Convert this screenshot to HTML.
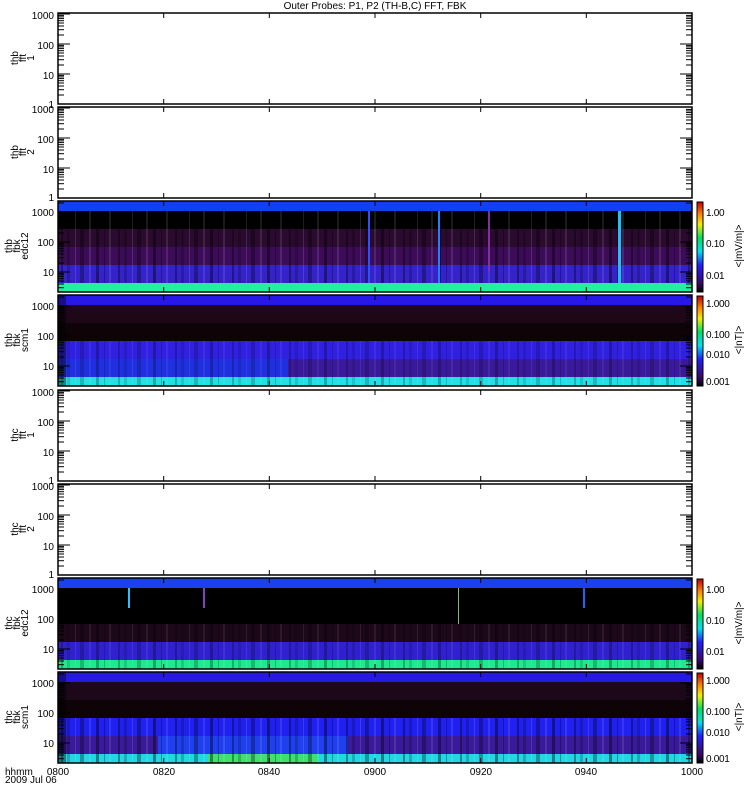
<!DOCTYPE html>
<html><head><meta charset="utf-8"><style>
html,body{margin:0;padding:0;background:#fff;width:750px;height:800px;overflow:hidden}
text{font-family:"Liberation Sans",sans-serif;font-size:10px;fill:#000}
</style></head><body>
<svg width="750" height="800" viewBox="0 0 750 800" xmlns="http://www.w3.org/2000/svg">
<defs>
<g id="dec" stroke="#000" stroke-width="1">
<line x1="0" y1="0" x2="12" y2="0"/>
<line x1="0" y1="-9" x2="6" y2="-9"/><line x1="0" y1="-14.3" x2="6" y2="-14.3"/>
<line x1="0" y1="-18" x2="6" y2="-18"/><line x1="0" y1="-21" x2="6" y2="-21"/>
<line x1="0" y1="-23.3" x2="6" y2="-23.3"/><line x1="0" y1="-25.4" x2="6" y2="-25.4"/>
<line x1="0" y1="-27.1" x2="6" y2="-27.1"/><line x1="0" y1="-28.6" x2="6" y2="-28.6"/>
</g>
<g id="xt" stroke="#000" stroke-width="1">
<line x1="105.7" y1="0" x2="105.7" y2="5"/><line x1="211.3" y1="0" x2="211.3" y2="5"/>
<line x1="317" y1="0" x2="317" y2="5"/><line x1="422.7" y1="0" x2="422.7" y2="5"/>
<line x1="528.3" y1="0" x2="528.3" y2="5"/>
<line x1="105.7" y1="91" x2="105.7" y2="86"/><line x1="211.3" y1="91" x2="211.3" y2="86"/>
<line x1="317" y1="91" x2="317" y2="86"/><line x1="422.7" y1="91" x2="422.7" y2="86"/>
<line x1="528.3" y1="91" x2="528.3" y2="86"/>
</g>
<g id="fftticks">
<use href="#dec" transform="translate(0,91)"/><use href="#dec" transform="translate(0,61)"/><use href="#dec" transform="translate(0,31)"/><line x1="0" y1="1" x2="12" y2="1" stroke="#000"/>
<use href="#dec" transform="translate(634,91) scale(-1,1)"/><use href="#dec" transform="translate(634,61) scale(-1,1)"/><use href="#dec" transform="translate(634,31) scale(-1,1)"/>
<use href="#xt"/>
</g>
<g id="fbkticks">
<use href="#dec" transform="translate(0,101)"/><use href="#dec" transform="translate(0,71)"/><use href="#dec" transform="translate(0,41)"/><use href="#dec" transform="translate(0,11)"/>
<use href="#dec" transform="translate(634,101) scale(-1,1)"/><use href="#dec" transform="translate(634,71) scale(-1,1)"/><use href="#dec" transform="translate(634,41) scale(-1,1)"/><use href="#dec" transform="translate(634,11) scale(-1,1)"/>
<use href="#xt"/>
</g>
<pattern id="st" width="57" height="91" patternUnits="userSpaceOnUse">
<rect x="3" y="0" width="2" height="91" fill="#000" opacity=".35"/>
<rect x="9" y="0" width="3" height="91" fill="#000" opacity=".2"/>
<rect x="17" y="0" width="1" height="91" fill="#fff" opacity=".12"/>
<rect x="22" y="0" width="4" height="91" fill="#000" opacity=".3"/>
<rect x="31" y="0" width="2" height="91" fill="#fff" opacity=".1"/>
<rect x="38" y="0" width="3" height="91" fill="#000" opacity=".4"/>
<rect x="46" y="0" width="1" height="91" fill="#000" opacity=".3"/>
<rect x="51" y="0" width="2" height="91" fill="#fff" opacity=".1"/>
</pattern>
<linearGradient id="cb" x1="0" y1="1" x2="0" y2="0">
<stop offset="0" stop-color="#000"/><stop offset=".1" stop-color="#3a0868"/><stop offset=".3" stop-color="#2020ff"/>
<stop offset=".45" stop-color="#00e0f0"/><stop offset=".6" stop-color="#00e060"/><stop offset=".75" stop-color="#f0f000"/>
<stop offset=".87" stop-color="#ff8000"/><stop offset="1" stop-color="#c00000"/>
</linearGradient>
</defs>

<text x="375" y="9" text-anchor="middle">Outer Probes: P1, P2 (TH-B,C) FFT, FBK</text>

<svg x="58" y="13" width="634" height="91"><use href="#fftticks"/></svg>
<rect x="58" y="13" width="634" height="91" fill="none" stroke="#000" stroke-width="1.5"/>
<svg x="58" y="107" width="634" height="91"><use href="#fftticks"/></svg>
<rect x="58" y="107" width="634" height="91" fill="none" stroke="#000" stroke-width="1.5"/>
<svg x="58" y="201" width="634" height="91">
<rect x="0" y="0" width="634" height="10" fill="#1040f0"/>
<rect x="0" y="10" width="634" height="18" fill="#000"/>
<rect x="0" y="28" width="634" height="18" fill="#2a0a2e"/>
<rect x="0" y="46" width="634" height="18" fill="#3c0c58"/>
<rect x="0" y="64" width="634" height="18" fill="#3522c8"/>
<rect x="0" y="82" width="634" height="9" fill="#20f0a0"/>
<rect x="0" y="10" width="634" height="72" fill="url(#st)"/>
<rect x="380" y="10" width="2" height="72" fill="#2080ff"/><rect x="430" y="10" width="2" height="60" fill="#8030a0"/>
<rect x="560" y="10" width="3" height="72" fill="#20c0ff"/><rect x="310" y="10" width="2" height="72" fill="#3050ff"/>
<use href="#fbkticks"/></svg>
<rect x="58" y="201" width="634" height="91" fill="none" stroke="#000" stroke-width="1.5"/>
<svg x="58" y="295" width="634" height="91">
<rect x="0" y="0" width="634" height="10" fill="#2818e8"/>
<rect x="0" y="10" width="634" height="18" fill="#1e0818"/>
<rect x="0" y="28" width="634" height="18" fill="#0e0408"/>
<rect x="0" y="46" width="634" height="18" fill="#3020e0"/>
<rect x="0" y="64" width="634" height="18" fill="#2030e0"/>
<rect x="230" y="64" width="404" height="18" fill="#3a1a9a"/>
<rect x="0" y="82" width="634" height="9" fill="#20e0e8"/>
<rect x="0" y="0" width="8" height="91" fill="#000" opacity=".4"/>
<rect x="0" y="46" width="634" height="45" fill="url(#st)" opacity=".6"/>
<use href="#fbkticks"/></svg>
<rect x="58" y="295" width="634" height="91" fill="none" stroke="#000" stroke-width="1.5"/>
<svg x="58" y="390" width="634" height="91"><use href="#fftticks"/></svg>
<rect x="58" y="390" width="634" height="91" fill="none" stroke="#000" stroke-width="1.5"/>
<svg x="58" y="484" width="634" height="91"><use href="#fftticks"/></svg>
<rect x="58" y="484" width="634" height="91" fill="none" stroke="#000" stroke-width="1.5"/>
<svg x="58" y="578" width="634" height="91">
<rect x="0" y="0" width="634" height="10" fill="#1a40f0"/>
<rect x="0" y="10" width="634" height="36" fill="#000"/>
<rect x="0" y="46" width="634" height="18" fill="#1c0818"/>
<rect x="0" y="64" width="634" height="18" fill="#3020d0"/>
<rect x="0" y="82" width="634" height="9" fill="#20e890"/>
<rect x="0" y="46" width="634" height="45" fill="url(#st)" opacity=".7"/>
<rect x="70" y="10" width="2" height="20" fill="#30c0ff"/><rect x="145" y="10" width="2" height="20" fill="#8040c0"/>
<rect x="400" y="10" width="1" height="36" fill="#80c080"/><rect x="525" y="10" width="2" height="20" fill="#2060ff"/>
<use href="#fbkticks"/></svg>
<rect x="58" y="578" width="634" height="91" fill="none" stroke="#000" stroke-width="1.5"/>
<svg x="58" y="672" width="634" height="91">
<rect x="0" y="0" width="634" height="10" fill="#2818e8"/>
<rect x="0" y="10" width="634" height="18" fill="#1c0818"/>
<rect x="0" y="28" width="634" height="18" fill="#0e0408"/>
<rect x="0" y="46" width="634" height="18" fill="#2020f0"/>
<rect x="0" y="64" width="634" height="18" fill="#3a1a9a"/>
<rect x="100" y="64" width="190" height="18" fill="#2040f0"/>
<rect x="0" y="82" width="634" height="9" fill="#20d8e0"/>
<rect x="150" y="82" width="110" height="9" fill="#40e070"/>
<rect x="0" y="0" width="8" height="91" fill="#000" opacity=".4"/>
<rect x="0" y="46" width="634" height="45" fill="url(#st)"/>
<use href="#fbkticks"/></svg>
<rect x="58" y="672" width="634" height="91" fill="none" stroke="#000" stroke-width="1.5"/>

<g text-anchor="end">
<text x="54" y="19">1000</text><text x="54" y="49">100</text><text x="54" y="79">10</text><text x="54" y="108">1</text>
<text x="54" y="113">1000</text><text x="54" y="143">100</text><text x="54" y="173">10</text><text x="54" y="201">1</text>
<text x="54" y="216">1000</text><text x="54" y="246">100</text><text x="54" y="276">10</text>
<text x="54" y="310">1000</text><text x="54" y="340">100</text><text x="54" y="370">10</text>
<text x="54" y="396">1000</text><text x="54" y="426">100</text><text x="54" y="456">10</text><text x="54" y="484">1</text>
<text x="54" y="490">1000</text><text x="54" y="520">100</text><text x="54" y="550">10</text><text x="54" y="578">1</text>
<text x="54" y="593">1000</text><text x="54" y="623">100</text><text x="54" y="653">10</text>
<text x="54" y="687">1000</text><text x="54" y="717">100</text><text x="54" y="747">10</text>
</g>
<g text-anchor="middle">
<text transform="translate(18,58) rotate(-90)"><tspan x="0" dy="0">thb</tspan><tspan x="0" dy="8">fft</tspan><tspan x="0" dy="8">1</tspan></text>
<text transform="translate(18,152) rotate(-90)"><tspan x="0">thb</tspan><tspan x="0" dy="8">fft</tspan><tspan x="0" dy="8">2</tspan></text>
<text transform="translate(12,246) rotate(-90)"><tspan x="0">thb</tspan><tspan x="0" dy="8">fbk</tspan><tspan x="0" dy="8">edc12</tspan></text>
<text transform="translate(12,340) rotate(-90)"><tspan x="0">thb</tspan><tspan x="0" dy="8">fbk</tspan><tspan x="0" dy="8">scm1</tspan></text>
<text transform="translate(18,435) rotate(-90)"><tspan x="0">thc</tspan><tspan x="0" dy="8">fft</tspan><tspan x="0" dy="8">1</tspan></text>
<text transform="translate(18,529) rotate(-90)"><tspan x="0">thc</tspan><tspan x="0" dy="8">fft</tspan><tspan x="0" dy="8">2</tspan></text>
<text transform="translate(12,623) rotate(-90)"><tspan x="0">thc</tspan><tspan x="0" dy="8">fbk</tspan><tspan x="0" dy="8">edc12</tspan></text>
<text transform="translate(12,717) rotate(-90)"><tspan x="0">thc</tspan><tspan x="0" dy="8">fbk</tspan><tspan x="0" dy="8">scm1</tspan></text>
</g>

<rect x="697" y="202" width="6" height="90" fill="url(#cb)" stroke="#000"/>
<rect x="697" y="296" width="6" height="90" fill="url(#cb)" stroke="#000"/>
<rect x="697" y="579" width="6" height="90" fill="url(#cb)" stroke="#000"/>
<rect x="697" y="673" width="6" height="90" fill="url(#cb)" stroke="#000"/>
<g letter-spacing="-0.3">
<text x="706" y="216">1.00</text><text x="706" y="247">0.10</text><text x="706" y="279">0.01</text>
<text x="706" y="307">1.000</text><text x="706" y="338">0.100</text><text x="706" y="358">0.010</text><text x="706" y="385">0.001</text>
<text x="706" y="593">1.00</text><text x="706" y="624">0.10</text><text x="706" y="655">0.01</text>
<text x="706" y="684">1.000</text><text x="706" y="715">0.100</text><text x="706" y="736">0.010</text><text x="706" y="762">0.001</text>
</g>
<g text-anchor="middle">
<text transform="translate(742,246) rotate(-90)">&lt;|mV/m|&gt;</text>
<text transform="translate(742,340) rotate(-90)">&lt;|nT|&gt;</text>
<text transform="translate(742,623) rotate(-90)">&lt;|mV/m|&gt;</text>
<text transform="translate(742,717) rotate(-90)">&lt;|nT|&gt;</text>
</g>

<g text-anchor="middle">
<text x="58" y="775">0800</text><text x="164" y="775">0820</text><text x="269" y="775">0840</text>
<text x="375" y="775">0900</text><text x="481" y="775">0920</text><text x="586" y="775">0940</text><text x="692" y="775">1000</text>
</g>
<text x="5" y="775">hhmm</text>
<text x="5" y="783">2009 Jul 06</text>
</svg>
</body></html>
